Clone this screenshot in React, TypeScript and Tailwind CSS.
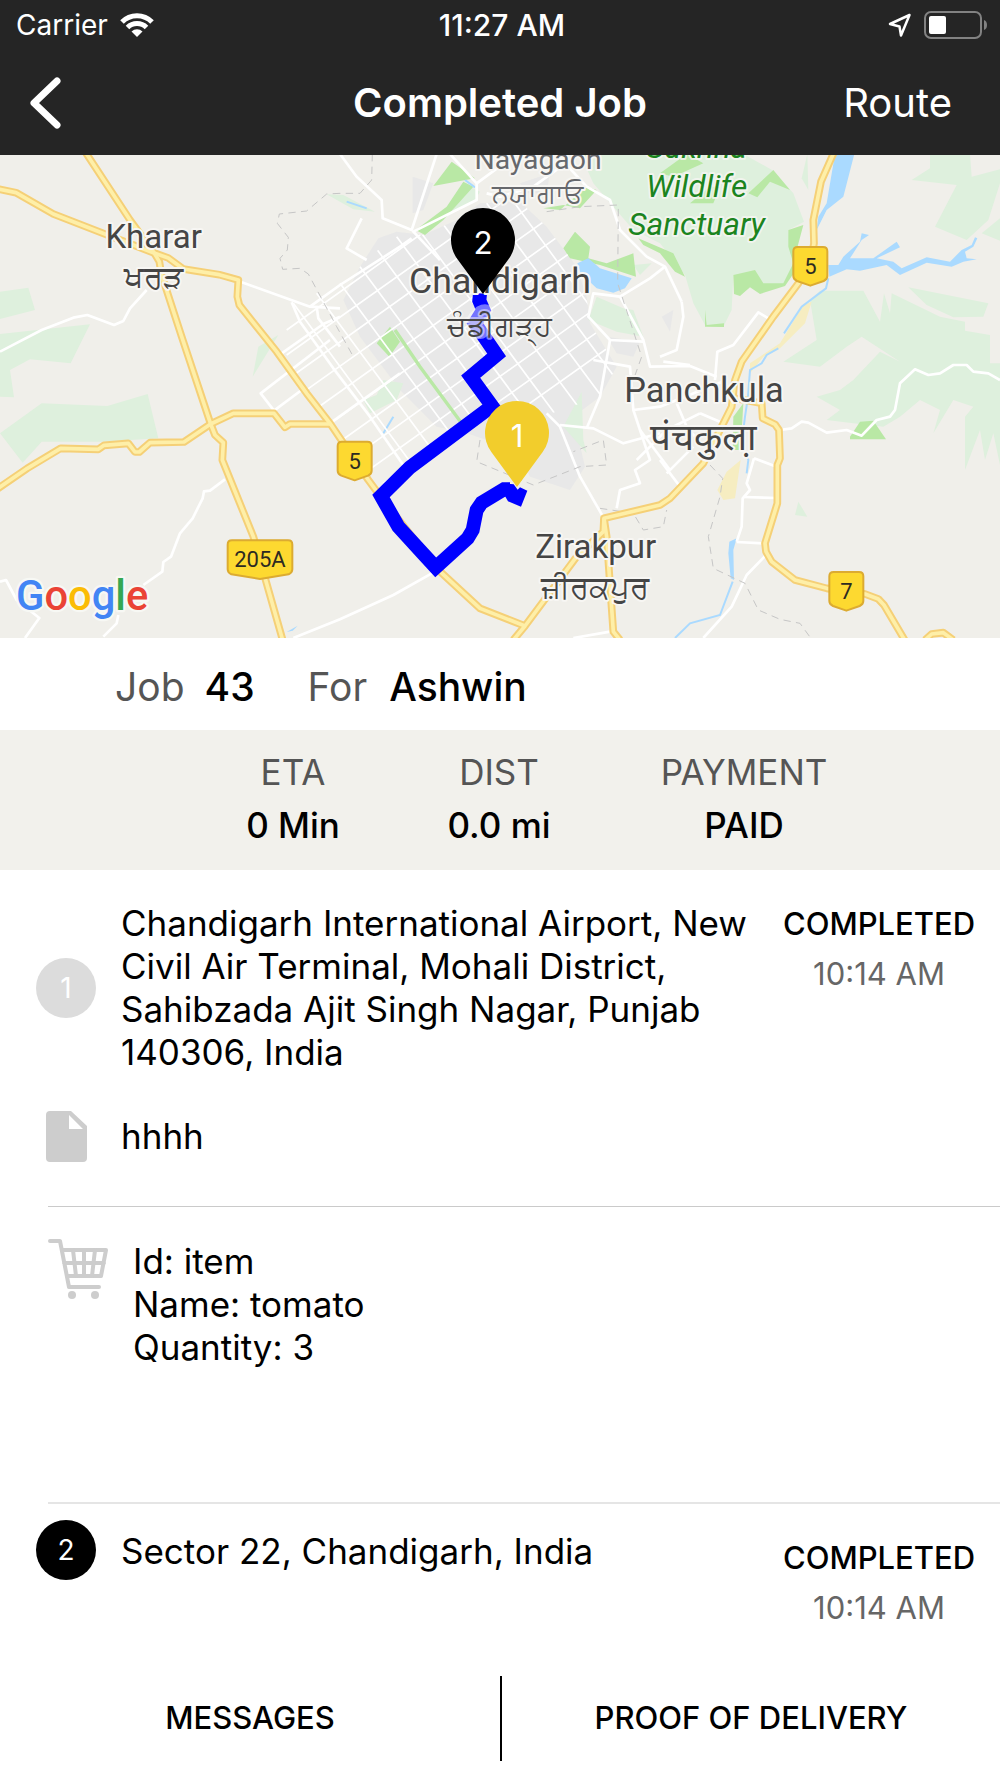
import React from "react";

const majorRoads = [
  "M252 0 L390 210 L462 308 L478 335 L484 372 L545 560 L632 822 L645 855 L670 878 L667 930 L760 1160 L848 1470",
  "M-10 116 L48 128 L160 192 L330 258 L460 308 L505 324 L550 357 L658 374 L715 390 L712 440 L718 465 L830 605 L920 730 L990 820 L1105 990 L1142 1040 L1310 1255 L1440 1375 L1575 1428",
  "M-10 1018 L82 955 L182 895 L295 898 L312 886 L385 880 L405 906 L418 906 L450 878 L552 876 L632 822 L700 790 L822 790 L855 832 L870 822 L990 822",
  "M1540 1470 L1575 1428 L1730 1220 L1810 1145 L1812 1105 L1980 1065 L2010 1045 L2110 940 L2195 770 L2205 690 L2225 635 L2320 500 L2395 400 L2430 345 L2442 280 L2440 210 L2463 95 L2505 0",
  "M1812 1105 L1820 1160 L1840 1445 L1860 1470",
  "M2205 745 L2285 760 L2288 805 L2325 823 L2337 840 L2340 925 L2332 945 L2332 1060 L2295 1180 L2298 1205 L2315 1235 L2385 1290 L2480 1315 L2595 1332 L2635 1347 L2652 1365 L2714 1470",
  "M2775 1470 L2795 1452 L2830 1448 L2860 1470",
];

const minorRoads = [
  "M0 605 L125 540 L220 503 L262 495 L342 525 L370 513 L390 475 L440 420",
  "M715 393 L930 470 L1020 405 L1200 290 L1235 265",
  "M875 457 L900 515 L1000 655 L1110 800 L1220 960",
  "M930 470 L1020 475 M950 470 L955 505 L1020 590",
  "M990 820 L1060 770 L1200 670",
  "M905 720 L822 782 L782 730 L990 570",
  "M845 610 L970 522 L1020 500",
  "M675 988 L630 1022 L612 1024 L608 1045 L578 1105 L540 1150 L513 1220 L490 1236 L487 1265 L430 1305",
  "M355 1395 L350 1420 L310 1460",
  "M0 1295 L18 1290 L50 1350 L118 1404 L75 1464",
  "M880 1464 L1020 1408 L1180 1335 L1310 1262",
  "M1020 12 L1070 80 L1145 150 L1148 205 L1235 240 L1240 225 L1310 12",
  "M1350 12 L1430 100 L1430 150 L1240 245 L1320 330",
  "M1430 100 L1550 12 M1460 130 L1500 140 L1600 110 L1690 45",
  "M1085 205 L1040 295 L1100 330",
  "M1700 45 L1760 110 L1830 150 L1860 240 L1940 320 L1995 350 L2045 455",
  "M1995 350 L1950 385 L1860 440 L1780 430 L1765 500 L1830 570 L1930 575",
  "M1860 440 L1930 570 L1950 650 L2070 648 L2150 680",
  "M1830 570 L1800 740 L1760 835",
  "M1640 790 L1680 830 L1740 980 L1812 1105",
  "M1680 825 L1780 835 L1870 880 L1980 850",
  "M1780 630 L1890 650 L1900 780 L1950 930 L1905 960 L1920 1000 L1860 1020 L1850 1075",
  "M1900 780 L1980 770 L2180 690 M1910 930 L2000 840 L2100 790",
  "M1980 930 L2040 1010 M2000 970 L2080 890",
  "M1920 840 L2010 960 M2030 760 L2060 830 L2110 890 M2100 790 L2170 820",
  "M2045 455 L2050 500 L2030 600 L1980 620 M1990 635 L2070 645",
  "M2145 690 L2152 605 L2200 585 L2275 487 L2305 505",
  "M2340 840 L2375 835 L2405 815 L2425 818 L2480 848 L2540 840 L2585 857 L2630 810 L2670 800 L2685 780 L2700 700 L2745 658 L2785 675 L2820 670 L2860 645 L2900 645 L2920 665 L2965 670 L3000 690",
  "M2262 925 L2330 950 M2262 925 L2240 1000 L2250 1020 L2228 1045 L2225 1130 L2210 1175",
  "M2230 1041 L2330 1044 M2210 1176 L2290 1180",
  "M2298 1215 L2240 1275 L2195 1370 L2110 1464",
  "M1720 1464 L1830 1445",
];

const sectorLines = [
  "M860 460 L1560 -40 M860 540 L1700 -60 M860 615 L1600 90 M860 690 L1800 20 M870 755 L1800 95 M880 825 L1800 170",
  "M900 885 L1800 245 M900 960 L1850 285 M950 1000 L1850 360 M980 1050 L1850 430 M1030 1085 L1850 505 M1300 965 L1850 575",
  "M880 460 L1300 1030 M950 430 L1400 1040 M1020 400 L1450 985 M1080 350 L1550 985 M1110 270 L1600 935",
  "M1190 260 L1700 950 M1250 230 L1760 920 M1320 210 L1790 845 M1390 180 L1820 760 M1460 160 L1850 690 M1530 140 L1880 620 M1590 130 L1880 525",
];

const parks = [
  "M0 425 L85 413 L105 480 L0 507Z",
  "M0 552 L270 523 L212 640 L90 628 L30 660 L42 742 L0 740Z",
  "M775 590 L835 555 L758 680Z",
  "M0 850 L125 760 L322 768 L443 732 L475 865 L310 875 L125 875 L68 938Z",
  "M980 133 L1030 135 L1125 185 L1060 178Z",
  "M1350 190 L1410 110 L1440 125 L1425 150 L1340 195Z",
  "M1790 440 L1870 475 L1900 480 L1930 560 L1850 545 L1765 510Z",
  "M1900 345 L1955 340 L1920 375Z",
  "M1090 750 L1130 735 L1150 690 L1210 700 L1190 750 L1110 790Z",
  "M1745 725 L1750 870 L1760 910 L1690 830Z",
  "M1740 12 L2230 12 L2320 62 L2380 130 L2412 215 L2365 240 L2370 295 L2390 330 L2350 405 L2290 415 L2270 385 L2200 375 L2195 480 L2170 530 L2115 525 L2080 460 L2055 375 L1980 280 L1900 240 L1840 170 L1780 100Z",
  "M2422 12 L2425 120 L2405 85Z",
  "M2790 12 L2910 12 L2915 80 L3000 58 L3000 100 L2965 210 L2900 270 L2805 230 L2870 105 L2735 90 L2790 55Z",
  "M2945 250 L3000 205 L3000 272Z",
  "M2725 412 L2965 460 L2950 500 L2860 502 L2780 465Z",
  "M2430 450 L2460 422 L2590 422 L2640 515 L2652 430 L2670 490 L2675 430 L2820 500 L2895 515 L2895 542 L2970 555 L2970 640 L3000 640 L3000 945 L2980 850 L2955 930 L2940 840 L2895 960 L2895 800 L2920 770 L2860 750 L2800 850 L2820 780 L2760 750 L2700 800 L2650 830 L2560 820 L2480 810 L2520 780 L2450 740 L2520 720 L2560 690 L2640 605 L2700 635 L2585 560 L2540 590 L2460 650 L2350 635 L2450 570Z",
  "M2385 1095 L2395 1055 L2422 1100Z",
];

const woods = [
  "M1355 35 L1425 85 L1300 108Z",
  "M1247 240 L1340 170 L1390 95 L1420 110 L1330 210 L1275 255Z",
  "M1690 295 L1725 245 L1770 290 L1765 325 L1820 340 L1900 310 L1908 380 L1800 345 L1710 325Z",
  "M1170 530 L1200 575 L1168 620 L1130 580Z",
  "M1630 175 L1690 165 L1740 175 L1790 120 L1760 110 L1680 180Z",
  "M1730 12 L1760 12 L1745 35Z",
  "M2245 130 L2320 60 L2370 120 L2310 95 L2272 142Z",
  "M2200 375 L2265 360 L2290 400 L2350 400 L2380 340 L2365 290 L2365 240 L2410 225 L2390 300 L2388 360 L2355 408 L2280 432 L2250 412 L2220 438 L2202 432Z",
  "M1915 265 L2020 310 L2055 380 L2025 365 L1980 310 L1930 285Z",
  "M2115 480 L2120 525 L2172 520 L2172 531 L2115 530Z",
  "M1980 70 L2060 12 L2110 40 L2020 80Z M2070 160 L2130 110 L2160 110 L2140 160Z",
  "M2550 868 L2550 860 L2580 815 L2620 812 L2658 868Z",
  "M2200 800 L2230 760 L2222 900 L2198 900Z",
];

const water = [
  "M2505 12 L2563 12 L2530 140 L2480 180 L2450 240 L2455 200 L2480 160Z",
  "M2485 345 L2515 345 L2530 320 L2580 275 L2585 250 L2607 255 L2585 270 L2550 325 L2620 325 L2690 275 L2700 292 L2630 325 L2680 335 L2705 355 L2780 322 L2850 335 L2885 300 L2915 285 L2925 262 L2932 265 L2920 290 L2895 305 L2900 325 L2930 328 L2890 335 L2855 350 L2780 338 L2700 375 L2660 345 L2580 362 L2540 358 L2488 380Z",
  "M1732 340 L1765 325 L1800 355 L1895 385 L1875 415 L1840 428 L1790 415 L1742 370Z",
  "M2188 1175 L2210 1165 L2200 1200 L2202 1290 L2192 1285 L2185 1210Z",
  "M860 1446 L893 1427 L878 1442Z",
];

const pins = [
  { label: "2", x: 1449, y: 270, color: "#000000" },
  { label: "1", x: 1551, y: 849, color: "#f2cd2c" },
];

const shields = [
  { label: "5", x: 2377, y: 288, width: 108 },
  { label: "5", x: 1010, y: 872, width: 108 },
  { label: "7", x: 2485, y: 1263, width: 108 },
  { label: "205A", x: 680, y: 1168, width: 200 },
];

function Shield({ label, x, y, width }: { label: string; x: number; y: number; width: number }) {
  return (
    <g transform={`translate(${x} ${y})`}>
      <path
        d={`M16 3 H${width - 16} Q${width - 3} 3 ${width - 3} 16 V90 Q${width - 3} 100 ${width - 14} 105 L${width / 2} 119 L14 105 Q3 100 3 90 V16 Q3 3 16 3Z`}
        fill="#fdd930"
        stroke="#dcab31"
        strokeWidth="6"
        strokeLinejoin="round"
      />
      <text x={width / 2} y="84" textAnchor="middle" fontSize="66" fill="#2c2a22">
        {label}
      </text>
    </g>
  );
}

function Pin({ label, x, y, color }: { label: string; x: number; y: number; color: string }) {
  return (
    <g transform={`translate(${x} ${y})`}>
      <path d="M0 162 L-77 57 A96 96 0 1 1 77 57Z" fill={color} />
      <text y="42" textAnchor="middle" fontSize="94" fill="#fff" className="font-['Inter',sans-serif]">
        {label}
      </text>
    </g>
  );
}

function RouteMap() {
  return (
    <svg
      viewBox="0 15 3000 1449"
      preserveAspectRatio="xMidYMid slice"
      role="img"
      aria-label="Route map"
      className="block w-full h-[483px] bg-[#f0efea] font-['Roboto','Noto_Sans',sans-serif]"
    >
      <clipPath id="city">
        <path d="M870 457 L1135 300 L1190 245 L1270 255 L1370 210 L1440 160 L1560 155 L1640 230 L1730 350 L1760 440 L1770 520 L1850 650 L1800 740 L1640 795 L1480 790 L1200 985 L1110 1010 L990 820 L905 720 L845 610Z" />
      </clipPath>
      <path
        d="M1135 265 L1190 245 L1270 255 L1370 210 L1440 160 L1560 155 L1640 230 L1730 350 L1760 440 L1770 520 L1850 650 L1800 740 L1720 800 L1755 950 L1710 1020 L1590 980 L1550 900 L1400 850 L1310 830 L1200 720 L1080 560 L1030 450 L1080 350Z"
        fill="#e8e8e8"
      />
      <path
        d="M1238 80 L1300 100 L1270 180 L1238 190Z M1560 100 L1650 70 L1640 130 L1580 130Z M1820 560 L1920 575 L1900 620 L1850 610Z M1985 500 L2020 480 L2010 545Z"
        fill="#e8e8e8"
      />
      <g fill="#def0dd">
        {parks.map((d) => (
          <path key={d} d={d} />
        ))}
      </g>
      <g fill="#b9e8a5">
        {woods.map((d) => (
          <path key={d} d={d} />
        ))}
      </g>
      <path
        d="M2410 465 L2435 455 L2415 520 L2340 595 L2290 620 L2250 670 L2250 640 L2340 580Z M2152 1020 L2180 965 L2222 930 L2205 1045 L2170 1050Z"
        fill="#f6edc1"
      />
      <g fill="#aadaff">
        {water.map((d) => (
          <path key={d} d={d} />
        ))}
      </g>
      <g fill="none" stroke="#aadaff" strokeWidth="6">
        <path d="M2485 385 L2478 415 L2405 470 L2352 550 M2335 595 L2300 615 L2285 640 L2250 660 L2244 740 L2235 800 L2225 880 L2245 930 L2240 970" />
        <path d="M2198 1295 L2160 1395 L2070 1420 L2025 1464 M1180 800 L1150 850 M1395 90 L1425 112 M1040 155 L1100 175" />
      </g>
      <g clipPath="url(#city)" fill="none" stroke="#fff" strokeWidth="5">
        {sectorLines.map((d) => (
          <path key={d} d={d} />
        ))}
      </g>
      <path d="M1185 540 L1260 650 L1385 820" fill="none" stroke="#b9e8a5" strokeWidth="10" />
      <g fill="none" stroke="#fff" strokeWidth="8" strokeLinejoin="round">
        {minorRoads.map((d) => (
          <path key={d} d={d} />
        ))}
      </g>
      <g fill="none" stroke="#c6c6c6" strokeWidth="3" strokeDasharray="22 16">
        <path d="M1020 130 L980 132 L920 183 L838 192 L832 220 L865 262 L862 300 L840 325 L848 358 L900 355 L925 372 L1010 530 L1060 620" />
        <path d="M1117 12 L1115 90 L1080 130 L1020 130 M1640 185 L1740 170 L1855 165 L1853 400 L1925 620 L1900 690" />
        <path d="M1440 870 L1430 935 L1600 1005 L1740 950 L1820 945 L1810 870 L1720 905 M1800 1075 L1900 1090 L1930 1140 L1990 1130 L2000 1080" />
        <path d="M2130 945 L2168 985 L2160 1040 L2125 1160 L2140 1255 L2235 1300 L2275 1380 L2340 1408 L2400 1420 L2432 1464" />
      </g>
      <g fill="none" stroke="#f5d077" strokeWidth="23" strokeLinejoin="round">
        {majorRoads.map((d) => (
          <path key={d} d={d} />
        ))}
      </g>
      <g fill="none" stroke="#feefa8" strokeWidth="11" strokeLinejoin="round">
        {majorRoads.map((d) => (
          <path key={d} d={d} />
        ))}
      </g>

      <path
        d="M1440 430 L1438 452 L1450 480 L1425 520 L1490 615 L1412 680 L1476 768 L1230 952 L1143 1038 L1195 1130 L1268 1210 L1307 1252 L1403 1165 L1418 1140 L1430 1080 L1445 1058 L1512 1018 L1530 1018"
        fill="none"
        stroke="#0000ff"
        strokeWidth="42"
        strokeMiterlimit="3"
      />
      <path d="M1505 1000 L1541 1003 L1553 1019 L1560 1012 L1582 1022 L1563 1070 L1524 1054 L1510 1030Z" fill="#0000ff" />
      <path
        d="M1430 470 Q1470 450 1480 485 Q1460 500 1475 540 Q1450 585 1415 555 Q1385 520 1410 490Z"
        fill="#fff"
        fillOpacity="0.45"
      />

      {shields.map((shield) => (
        <Shield key={`${shield.label}-${shield.x}`} {...shield} />
      ))}

      <g textAnchor="middle" stroke="#f7f6f3" strokeWidth="12" strokeLinejoin="round" paintOrder="stroke" fill="#454545">
        <text x="461" y="293" fontSize="99">Kharar</text>
        <text x="460" y="413" fontSize="94" fontWeight="500">ਖਰੜ</text>
        <g fill="#66686c">
          <text x="1614" y="58" fontSize="85">Nayagaon</text>
          <text x="1613" y="160" fontSize="82" fontWeight="500">ਨਯਾਗਾਓ</text>
        </g>
        <text x="1500" y="428" fontSize="107">Chandigarh</text>
        <text x="1498" y="557" fontSize="88" fontWeight="500" strokeOpacity="0.5">ਚੰਡੀਗੜ੍ਹ</text>
        <text x="2112" y="757" fontSize="103">Panchkula</text>
        <text x="2110" y="900" fontSize="110">पंचकुला़</text>
        <text x="1787" y="1223" fontSize="99">Zirakpur</text>
        <text x="1785" y="1345" fontSize="94" fontWeight="500">ਜ਼ੀਰਕਪੁਰ</text>
        <g fill="#1b8420" fontStyle="italic" fontSize="95" strokeOpacity="0.8">
          <text x="2090" y="25">Sukhna</text>
          <text x="2090" y="140">Wildlife</text>
          <text x="2090" y="255">Sanctuary</text>
        </g>
      </g>

      {pins.map((pin) => (
        <Pin key={pin.label} {...pin} />
      ))}

      <text
        x="48"
        y="1380"
        fontSize="125"
        fontWeight="500"
        stroke="#f7f8f4"
        strokeWidth="14"
        strokeLinejoin="round"
        paintOrder="stroke"
      >
        <tspan fill="#4285f4">G</tspan>
        <tspan fill="#ea4335">o</tspan>
        <tspan fill="#fbbc05">o</tspan>
        <tspan fill="#4285f4">g</tspan>
        <tspan fill="#34a853">l</tspan>
        <tspan fill="#ea4335">e</tspan>
      </text>
    </svg>
  );
}

function StatusBar() {
  return (
    <div className="h-[50px] pl-4 pr-3 grid grid-cols-3 items-center text-[28px]">
      <div className="flex items-center gap-3">
        Carrier
        <svg viewBox="0 0 34 24" className="w-[34px] h-6" fill="none" stroke="#fff" strokeWidth="5">
          <path d="M2 9 A21 21 0 0 1 32 9" />
          <path d="M7.500 14.500 A13.500 13.500 0 0 1 26.500 14.500" />
          <path d="M17 24 L11.500 18.500 A8 8 0 0 1 22.500 18.500Z" fill="#fff" stroke="none" />
        </svg>
      </div>
      <div className="text-center text-[30px] font-medium">11:27 AM</div>
      <div className="flex items-center justify-end gap-3">
        <svg viewBox="0 0 24 24" className="w-6 h-6" fill="none" stroke="#fff" strokeWidth="2.500" strokeLinejoin="round">
          <path d="M21.500 2 L2 11 L11.500 13.500 L13 22.500Z" />
        </svg>
        <svg viewBox="0 0 64 28" className="w-16 h-7" fill="none">
          <rect x="1" y="1" width="56" height="26" rx="6" stroke="#828282" strokeWidth="2" />
          <rect x="5" y="5" width="17" height="18" rx="2" fill="#fff" />
          <path d="M60 9 Q63 10 63 14 Q63 18 60 19Z" fill="#828282" />
        </svg>
      </div>
    </div>
  );
}

function Status({ time }: { time: string }) {
  return (
    <div className="w-[194px] shrink-0 text-center text-[31px] leading-[43px]">
      <div className="font-medium">COMPLETED</div>
      <div className="mt-[7px] text-[#666]">{time}</div>
    </div>
  );
}

function Stat({ label, value }: { label: string; value: string }) {
  return (
    <div className="text-center text-[35px] leading-[53px]">
      <dt className="text-[#555]">{label}</dt>
      <dd className="font-medium">{value}</dd>
    </div>
  );
}

export default function App() {
  return (
    <div className="min-h-screen flex flex-col bg-white text-black font-['Inter',sans-serif]">
      <header className="bg-[#252525] text-white">
        <StatusBar />
        <div className="h-[105px] px-12 grid grid-cols-[1fr_auto_1fr] items-center">
          <button aria-label="Back" className="-ml-5 justify-self-start">
            <svg viewBox="0 0 34 52" className="w-[34px] h-[52px]" fill="none" stroke="#fff" strokeWidth="7" strokeLinecap="round" strokeLinejoin="round">
              <path d="M29 4 L6 26 L29 48" />
            </svg>
          </button>
          <h1 className="text-[40px] font-semibold">Completed Job</h1>
          <a href="#route" className="justify-self-end text-[40px]">
            Route
          </a>
        </div>
      </header>

      <RouteMap />

      <div className="h-[92px] pt-1.5 pl-[115px] flex items-center text-[39px]">
        <span className="text-[#555]">Job</span>
        <span className="ml-5 font-medium">43</span>
        <span className="ml-[53px] text-[#555]">For</span>
        <span className="ml-[22px] font-medium">Ashwin</span>
      </div>

      <dl className="h-[140px] pl-[190px] pr-[114px] pt-4 grid grid-cols-[206fr_206fr_284fr] bg-[#f2f1ec]">
        <Stat label="ETA" value="0 Min" />
        <Stat label="DIST" value="0.0 mi" />
        <Stat label="PAYMENT" value="PAID" />
      </dl>

      <main className="text-[35px] leading-[43px]">
        <section className="pt-8 pb-11">
          <div className="flex pl-9 pr-6">
            <div className="w-[60px] h-[60px] mr-[25px] self-center shrink-0 rounded-full bg-[#dcdcdc] text-white text-[28px] flex items-center justify-center">
              1
            </div>
            <p className="flex-1">
              Chandigarh International Airport, New Civil Air Terminal, Mohali District, Sahibzada Ajit Singh Nagar, Punjab 140306, India
            </p>
            <Status time="10:14 AM" />
          </div>
          <div className="mt-[37px] pl-[46px] flex items-center">
            <svg viewBox="0 0 41 51" className="w-[41px] h-[51px] mr-[34px]" fill="#cdcdcd">
              <path d="M4 0 H25 L41 15 V47 Q41 51 37 51 H4 Q0 51 0 47 V4 Q0 0 4 0Z M23 4 V18 H37Z" fillRule="evenodd" />
            </svg>
            <p>hhhh</p>
          </div>
        </section>

        <section className="ml-12 pt-[31px] pb-[133px] flex border-t border-[#cacaca]">
          <svg viewBox="0 0 61 62" className="w-[61px] h-[62px] mr-6" fill="none" stroke="#cdcdcd" strokeWidth="4" strokeLinecap="round" strokeLinejoin="round">
            <path d="M2 3 H12 L21 49 H51 M14 12 H58 L53 38 H19 M16 25 H56" />
            <path d="M25 12 L28 38 M36 12 V38 M47 12 L44 38" />
            <circle cx="24" cy="57" r="4" fill="#cdcdcd" stroke="none" />
            <circle cx="47" cy="57" r="4" fill="#cdcdcd" stroke="none" />
          </svg>
          <p className="pt-0.5">
            Id: item
            <br />
            Name: tomato
            <br />
            Quantity: 3
          </p>
        </section>

        <section>
          <div className="ml-12 border-t-2 border-[#e5e5e5]" />
          <div className="pl-9 pr-6 pt-4 flex items-start">
            <div className="w-[60px] h-[60px] mr-[25px] shrink-0 rounded-full bg-black text-white text-[28px] flex items-center justify-center">
              2
            </div>
            <p className="flex-1 pt-2.5">Sector 22, Chandigarh, India</p>
            <div className="pt-4">
              <Status time="10:14 AM" />
            </div>
          </div>
        </section>
      </main>

      <footer className="mt-auto mb-[17px] grid grid-cols-2 text-[31px] font-medium">
        <button className="h-[85px]">MESSAGES</button>
        <button className="h-[85px] border-l-2 border-black">PROOF OF DELIVERY</button>
      </footer>
    </div>
  );
}
